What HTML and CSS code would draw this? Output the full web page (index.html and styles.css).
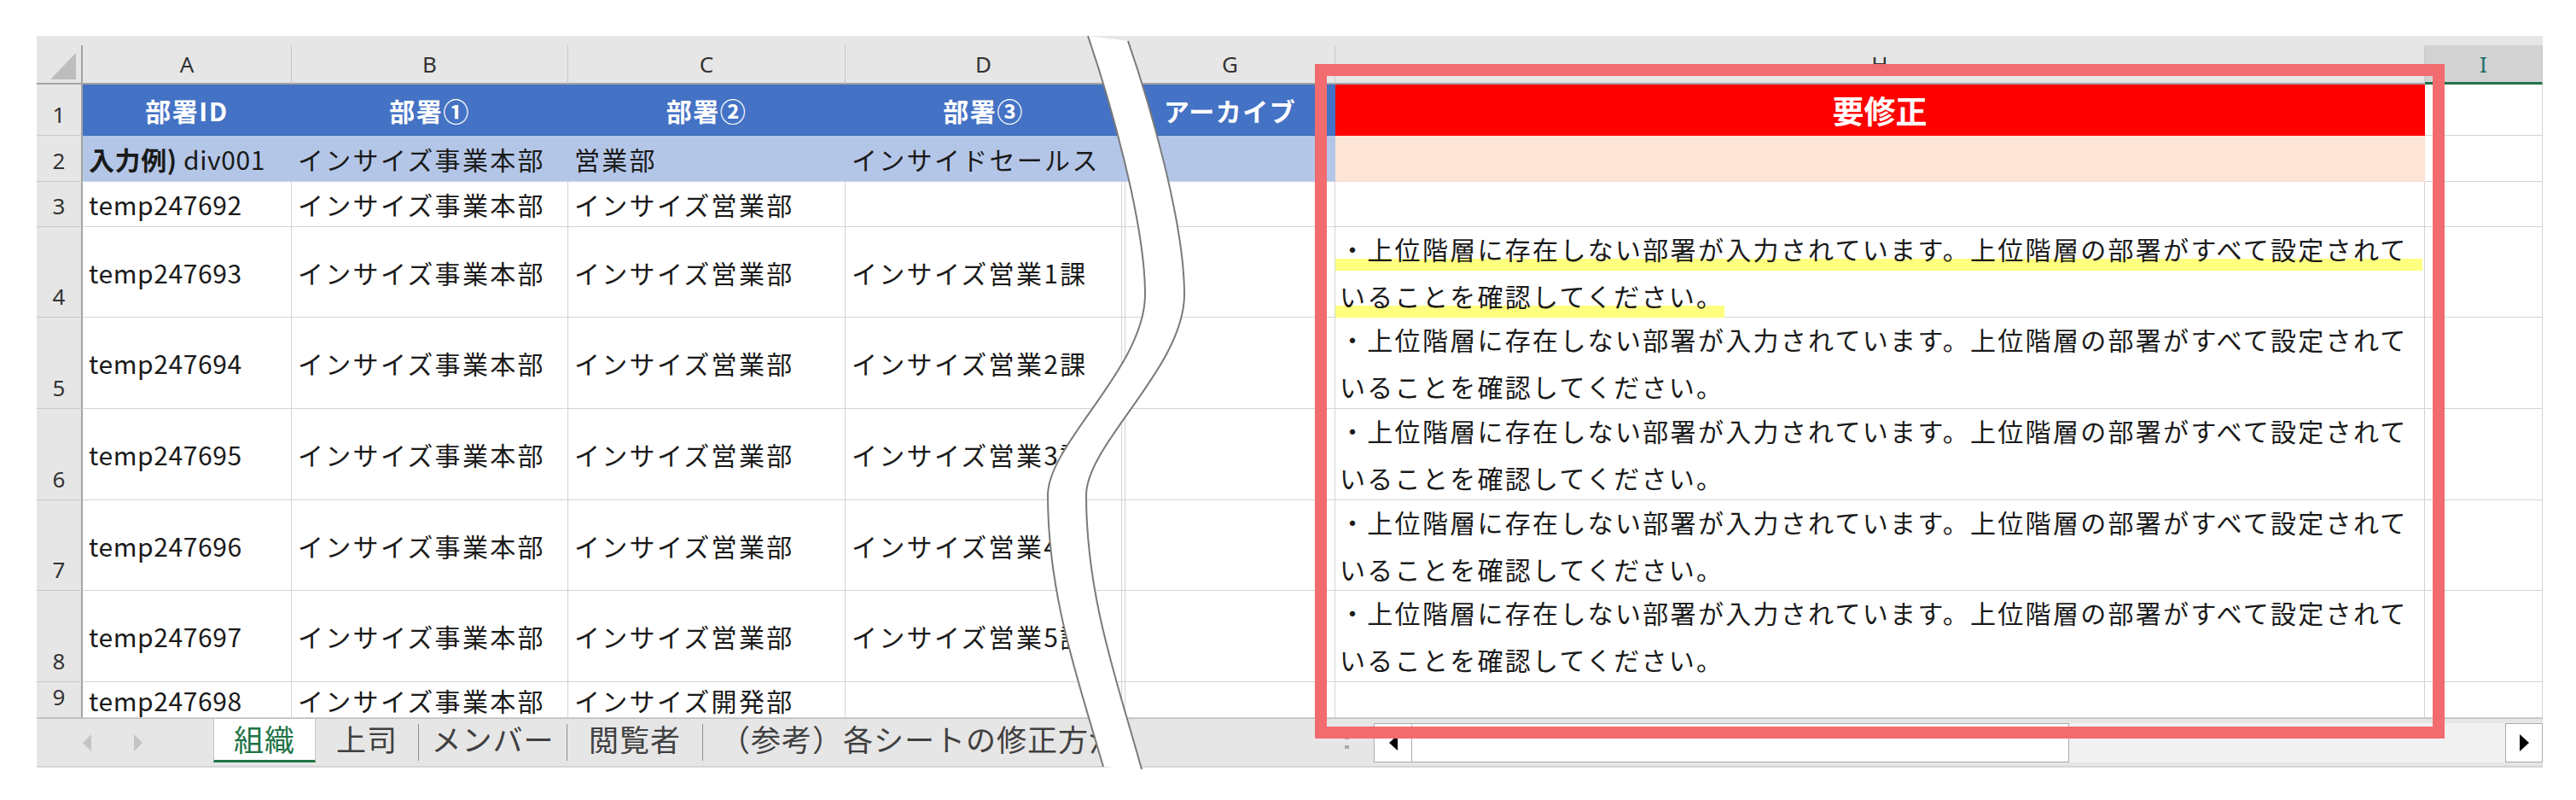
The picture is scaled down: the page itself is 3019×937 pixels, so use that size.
FILE: index.html
```html
<!DOCTYPE html>
<html lang="ja">
<head>
<meta charset="utf-8">
<title>組織</title>
<link rel="stylesheet" href="styles.css">
</head>
<body>
<div class="page">
  <div class="sheet">
    <div class="ch corner"><div class="chi"><svg class="tri" width="52" height="44" viewBox="0 0 52 44"><polygon points="46,9 46,40 16,40" fill="#BDBDBD"/></svg></div></div>
    <div class="ch"><div class="chi">A</div></div>
    <div class="ch"><div class="chi">B</div></div>
    <div class="ch"><div class="chi">C</div></div>
    <div class="ch"><div class="chi">D</div></div>
    <div class="ch"><div class="chi"></div></div>
    <div class="ch"><div class="chi">G</div></div>
    <div class="ch"><div class="chi">H</div></div>
    <div class="ch sel"><div class="chi">I</div></div>

    <div class="rh">1</div>
    <div class="c r1">部署ID</div>
    <div class="c r1">部署①</div>
    <div class="c r1">部署②</div>
    <div class="c r1">部署③</div>
    <div class="c r1 hid"></div>
    <div class="c r1">アーカイブ</div>
    <div class="c r1 red">要修正</div>
    <div class="c"></div>

    <div class="rh">2</div>
    <div class="c r2 lat"><b class="bold">入力例)</b>&nbsp;div001</div>
    <div class="c r2">インサイズ事業本部</div>
    <div class="c r2">営業部</div>
    <div class="c r2">インサイドセールス</div>
    <div class="c r2 hid"></div>
    <div class="c r2"></div>
    <div class="c peach"></div>
    <div class="c"></div>

    <div class="rh">3</div>
    <div class="c lat">temp247692</div>
    <div class="c">インサイズ事業本部</div>
    <div class="c">インサイズ営業部</div>
    <div class="c"></div>
    <div class="c hid"></div>
    <div class="c"></div>
    <div class="c"></div>
    <div class="c"></div>

    <div class="rh">4</div>
    <div class="c lat">temp247693</div>
    <div class="c">インサイズ事業本部</div>
    <div class="c">インサイズ営業部</div>
    <div class="c">インサイズ営業1課</div>
    <div class="c hid"></div>
    <div class="c"></div>
    <div class="c msg"><i class="mark m1"></i><i class="mark m2"></i><span class="txt">・上位階層に存在しない部署が入力されています。上位階層の部署がすべて設定されて<br>いることを確認してください。</span></div>
    <div class="c"></div>

    <div class="rh">5</div>
    <div class="c lat">temp247694</div>
    <div class="c">インサイズ事業本部</div>
    <div class="c">インサイズ営業部</div>
    <div class="c">インサイズ営業2課</div>
    <div class="c hid"></div>
    <div class="c"></div>
    <div class="c msg"><span class="txt">・上位階層に存在しない部署が入力されています。上位階層の部署がすべて設定されて<br>いることを確認してください。</span></div>
    <div class="c"></div>

    <div class="rh">6</div>
    <div class="c lat">temp247695</div>
    <div class="c">インサイズ事業本部</div>
    <div class="c">インサイズ営業部</div>
    <div class="c">インサイズ営業3課</div>
    <div class="c hid"></div>
    <div class="c"></div>
    <div class="c msg"><span class="txt">・上位階層に存在しない部署が入力されています。上位階層の部署がすべて設定されて<br>いることを確認してください。</span></div>
    <div class="c"></div>

    <div class="rh">7</div>
    <div class="c lat">temp247696</div>
    <div class="c">インサイズ事業本部</div>
    <div class="c">インサイズ営業部</div>
    <div class="c">インサイズ営業4課</div>
    <div class="c hid"></div>
    <div class="c"></div>
    <div class="c msg"><span class="txt">・上位階層に存在しない部署が入力されています。上位階層の部署がすべて設定されて<br>いることを確認してください。</span></div>
    <div class="c"></div>

    <div class="rh">8</div>
    <div class="c lat">temp247697</div>
    <div class="c">インサイズ事業本部</div>
    <div class="c">インサイズ営業部</div>
    <div class="c">インサイズ営業5課</div>
    <div class="c hid"></div>
    <div class="c"></div>
    <div class="c msg"><span class="txt">・上位階層に存在しない部署が入力されています。上位階層の部署がすべて設定されて<br>いることを確認してください。</span></div>
    <div class="c"></div>

    <div class="rh">9</div>
    <div class="c lat">temp247698</div>
    <div class="c">インサイズ事業本部</div>
    <div class="c">インサイズ開発部</div>
    <div class="c"></div>
    <div class="c hid"></div>
    <div class="c"></div>
    <div class="c"></div>
    <div class="c"></div>
  </div>

  <div class="tabbar">
    <div class="tnav"><svg width="207" height="56" viewBox="0 0 207 56"><polygon points="64,18 64,38 54,28" fill="#C4C4C4"/><polygon points="114,18 114,38 124,28" fill="#C4C4C4"/></svg></div>
    <div class="tab active">組織</div>
    <div class="tab t2">上司</div>
    <div class="sep"></div>
    <div class="tab t3">メンバー</div>
    <div class="sep"></div>
    <div class="tab t4">閲覧者</div>
    <div class="sep"></div>
    <div class="tab t5">（参考）各シートの修正方法</div>
    <div class="spacer"></div>
    <div class="split"><svg width="6" height="20" viewBox="0 0 6 20"><rect x="0" y="2" width="5" height="4" fill="#A8A8A8"/><rect x="0" y="13" width="5" height="4" fill="#A8A8A8"/></svg></div>
    <div class="hscroll">
      <div class="sbtn"><svg width="14" height="20" viewBox="0 0 14 20"><polygon points="12,1 12,19 2,10" fill="#000"/></svg></div>
      <div class="strack"></div>
      <div class="spacer"></div>
      <div class="sbtn right"><svg width="14" height="22" viewBox="0 0 14 22"><polygon points="2,1 2,21 13,11" fill="#000"/></svg></div>
    </div>
  </div>

  <svg class="wave" width="3019" height="937" viewBox="0 0 3019 937">
    <path d="M1275,42 C1300,115 1342,260 1342,345 C1342,430 1228,520 1228,580 C1228,700 1265,800 1293,898 L1338,901 C1310,800 1273,700 1273,580 C1273,520 1388,430 1388,345 C1388,260 1347,120 1322,48 Z" fill="#FFFFFF"/>
    <path d="M1275,42 C1300,115 1342,260 1342,345 C1342,430 1228,520 1228,580 C1228,700 1265,800 1293,898" fill="none" stroke="#7A7A7A" stroke-width="2"/>
    <path d="M1322,48 C1347,120 1388,260 1388,345 C1388,430 1273,520 1273,580 C1273,700 1310,800 1338,901" fill="none" stroke="#7A7A7A" stroke-width="2"/>
  </svg>

  <div class="frame"></div>
</div>
</body>
</html>
```

FILE: styles.css
```css
html, body {
  margin: 0;
  padding: 0;
  background: #ffffff;
  overflow: hidden;
}

.page {
  position: relative;
  width: 3019px;
  height: 937px;
  padding: 42px 0 0 43px;
  box-sizing: border-box;
  background: #ffffff;
  font-family: "Noto Sans CJK JP", "Noto Sans", sans-serif;
}

.sheet {
  display: grid;
  grid-template-columns: 54px 245px 324px 325px 324px 4px 246px 1277px 138px;
  grid-template-rows: 57px 60px 54px 53px 106px 107px 107px 106px 107px 42px;
  width: 2937px;
}

/* column headers */
.ch {
  background: #E6E6E6;
  padding-top: 11px;
  box-sizing: border-box;
}
.chi {
  height: 46px;
  box-sizing: border-box;
  border-right: 1px solid #C8C8C8;
  border-bottom: 2px solid #A3A3A3;
  display: flex;
  align-items: center;
  justify-content: center;
  font-family: "Noto Sans", sans-serif;
  font-size: 26px;
  color: #333333;
}
.corner .chi {
  border-right: 2px solid #A3A3A3;
  align-items: flex-end;
  justify-content: flex-start;
}
.tri {
  display: block;
}
.ch.sel .chi {
  background: #D2D2D2;
  border-bottom: 3px solid #217346;
  color: #1E6F6A;
}

/* row headers */
.rh {
  background: #E6E6E6;
  border-right: 2px solid #A3A3A3;
  border-bottom: 1px solid #C8C8C8;
  box-sizing: border-box;
  display: flex;
  justify-content: center;
  align-items: flex-end;
  padding-bottom: 11px;
  font-family: "Noto Sans", sans-serif;
  font-size: 26px;
  line-height: 1;
  color: #333333;
}

/* cells */
.c {
  position: relative;
  box-sizing: border-box;
  border-right: 1px solid #D4D4D4;
  border-bottom: 1px solid #D4D4D4;
  display: flex;
  align-items: center;
  padding-left: 7px;
  font-size: 30px;
  letter-spacing: 2.3px;
  color: #1A1A1A;
  white-space: nowrap;
  background: #ffffff;
}
.c.lat {
  letter-spacing: 0.6px;
}
.bold {
  font-weight: bold;
  letter-spacing: 0.6px;
}
.r1 {
  background: #4472C4;
  border-color: #4472C4;
  border-bottom-color: #3F69B6;
  color: #ffffff;
  font-weight: bold;
  font-size: 30px;
  letter-spacing: 1.5px;
  justify-content: center;
  padding-left: 0;
}
.r1.red {
  background: #FF0000;
  border-color: #FF0000;
  font-size: 37px;
  letter-spacing: 0;
}
.r2 {
  background: #B4C6E7;
  border-right-color: #B4C6E7;
  border-bottom-color: #C9D4E8;
}
.peach {
  background: #FCE4D6;
  border-right-color: #FCE4D6;
  border-bottom-color: #F1DCD0;
}
.hid {
  padding-left: 0;
}

/* message cells */
.msg {
  padding: 0 0 0 5px;
  line-height: 55px;
}
.txt {
  position: relative;
}
.mark {
  position: absolute;
  left: 0;
  background: #FFFF80;
}
.m1 {
  top: 37px;
  height: 14px;
  right: 2px;
}
.m2 {
  top: 92px;
  height: 14px;
  width: 456px;
}

/* sheet tabs bar */
.tabbar {
  width: 2937px;
  height: 58px;
  box-sizing: border-box;
  background: #E6E6E6;
  border-top: 1px solid #BEBEBE;
  border-bottom: 2px solid #D4D4D4;
  display: flex;
  align-items: flex-start;
  font-size: 35px;
  color: #404040;
}
.tnav {
  width: 207px;
  height: 55px;
  flex: none;
}
.tnav svg {
  display: block;
}
.tab {
  height: 51px;
  box-sizing: border-box;
  display: flex;
  align-items: center;
  justify-content: center;
  padding-bottom: 6px;
  letter-spacing: 1px;
  white-space: nowrap;
  flex: none;
}
.tab.active {
  width: 120px;
  background: #ffffff;
  color: #217346;
  border-bottom: 3px solid #217346;
  border-left: 1px solid #C6C6C6;
  border-right: 1px solid #C6C6C6;
  padding-bottom: 3px;
}
.t2 { width: 120px; }
.t3 { width: 173px; }
.t4 { width: 158px; }
.t5 {
  justify-content: flex-start;
  padding-left: 20px;
}
.sep {
  width: 1px;
  height: 43px;
  margin-top: 6px;
  background: #8E8E8E;
  flex: none;
}
.spacer {
  flex: 1;
}
.split {
  width: 34px;
  height: 55px;
  flex: none;
  display: flex;
  align-items: center;
  box-sizing: border-box;
}
.split svg {
  display: block;
}
.hscroll {
  width: 1370px;
  height: 46px;
  margin-top: 5px;
  background: #F1F1F1;
  display: flex;
  flex: none;
}
.sbtn {
  width: 45px;
  height: 46px;
  box-sizing: border-box;
  background: #ffffff;
  border: 1px solid #ABABAB;
  display: flex;
  align-items: center;
  justify-content: center;
  flex: none;
}
.sbtn.right {
  width: 44px;
}
.strack {
  width: 770px;
  height: 46px;
  box-sizing: border-box;
  background: #ffffff;
  border: 1px solid #ABABAB;
  border-left: none;
  flex: none;
}

/* overlays */
.wave {
  position: absolute;
  left: 0;
  top: 0;
}
.frame {
  position: absolute;
  left: 1541px;
  top: 75px;
  width: 1324px;
  height: 790px;
  border: 14px solid #F26B6E;
  box-sizing: border-box;
}
```
